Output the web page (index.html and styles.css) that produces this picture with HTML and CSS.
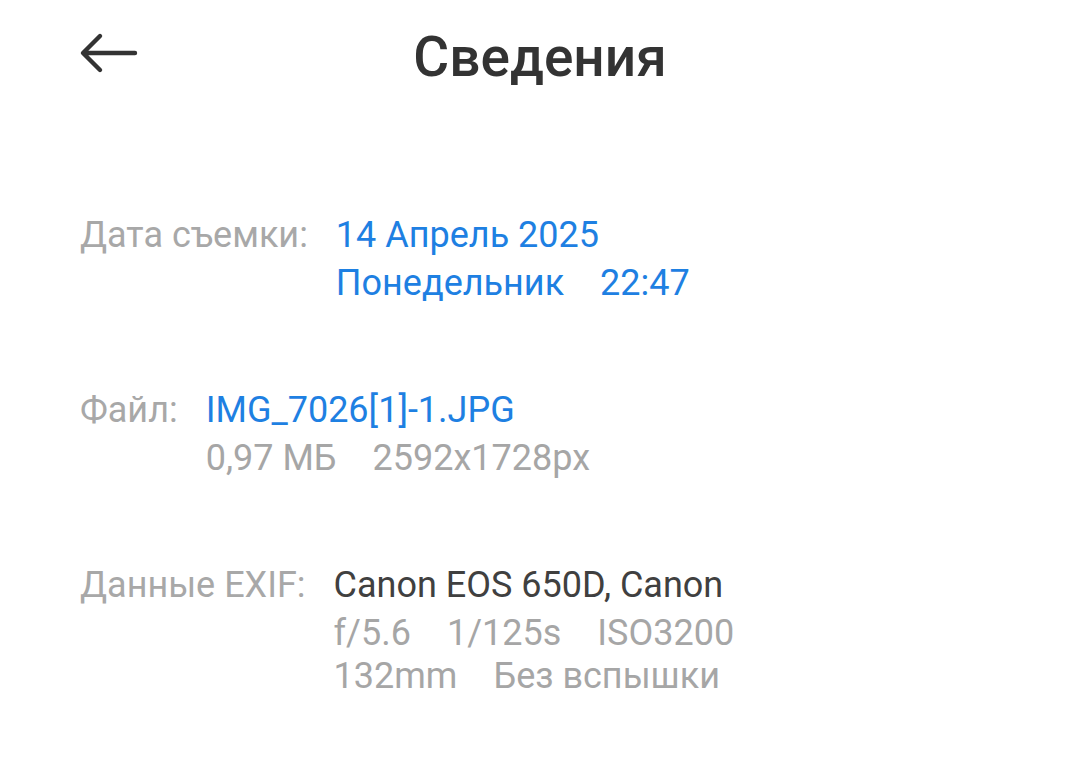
FILE: index.html
```html
<!DOCTYPE html>
<html lang="ru">
<head>
<meta charset="utf-8">
<link rel="stylesheet" href="styles.css">
</head>
<body>
<div class="screen">
  <header class="topbar">
    <button class="back" aria-label="Назад">
      <svg width="60" height="44" viewBox="0 0 60 44"><path d="M56 22H5M21 5L4 22l17 17" fill="none" stroke="#333" stroke-width="4.4" stroke-linecap="round" stroke-linejoin="round"/></svg>
    </button>
    <h1 class="title">Сведения</h1>
  </header>
  <main class="details">
    <section class="row">
      <div class="label">Дата съемки:</div>
      <div class="value">
        <div class="line blue">14 Апрель 2025</div>
        <div class="line blue"><span class="item">Понедельник</span><span class="item">22:47</span></div>
      </div>
    </section>
    <section class="row">
      <div class="label">Файл:</div>
      <div class="value">
        <div class="line blue">IMG_7026[1]-1.JPG</div>
        <div class="line gray"><span class="item">0,97 МБ</span><span class="item">2592x1728px</span></div>
      </div>
    </section>
    <section class="row">
      <div class="label">Данные EXIF:</div>
      <div class="value">
        <div class="line dark">Canon EOS 650D, Canon</div>
        <div class="line gray"><span class="item">f/5.6</span><span class="item">1/125s</span><span class="item">ISO3200</span></div>
        <div class="line gray tight"><span class="item">132mm</span><span class="item">Без вспышки</span></div>
      </div>
    </section>
  </main>
</div>
</body>
</html>
```
FILE: styles.css
```css
html, body {
  margin: 0;
  padding: 0;
  background: #ffffff;
}
body {
  font-family: Roboto, "Noto Sans", sans-serif;
  width: 1080px;
  height: 780px;
  overflow: hidden;
}
.screen {
  display: flex;
  flex-direction: column;
}
.topbar {
  position: relative;
  height: 116px;
  display: flex;
  align-items: center;
  justify-content: center;
}
.back {
  position: absolute;
  left: 79px;
  top: 31px;
  border: 0;
  background: none;
  padding: 0;
  display: flex;
}
.title {
  margin: 0;
  font-size: 55px;
  font-weight: 500;
  color: #333333;
  line-height: 1;
  margin-top: -2px;
}
.details {
  padding: 95px 0 0 80px;
  display: flex;
  flex-direction: column;
  gap: 79px;
}
.row {
  display: flex;
  gap: 28px;
  font-size: 36px;
  line-height: 48px;
}
.label {
  color: #a8a8a8;
}
.value {
  display: flex;
  flex-direction: column;
}
.item {
  margin-right: 36px;
}
.item:last-child {
  margin-right: 0;
}
.blue { color: #1e80e2; }
.gray { color: #a6a6a6; }
.dark { color: #404040; }
.tight { margin-top: -5px; }
```
